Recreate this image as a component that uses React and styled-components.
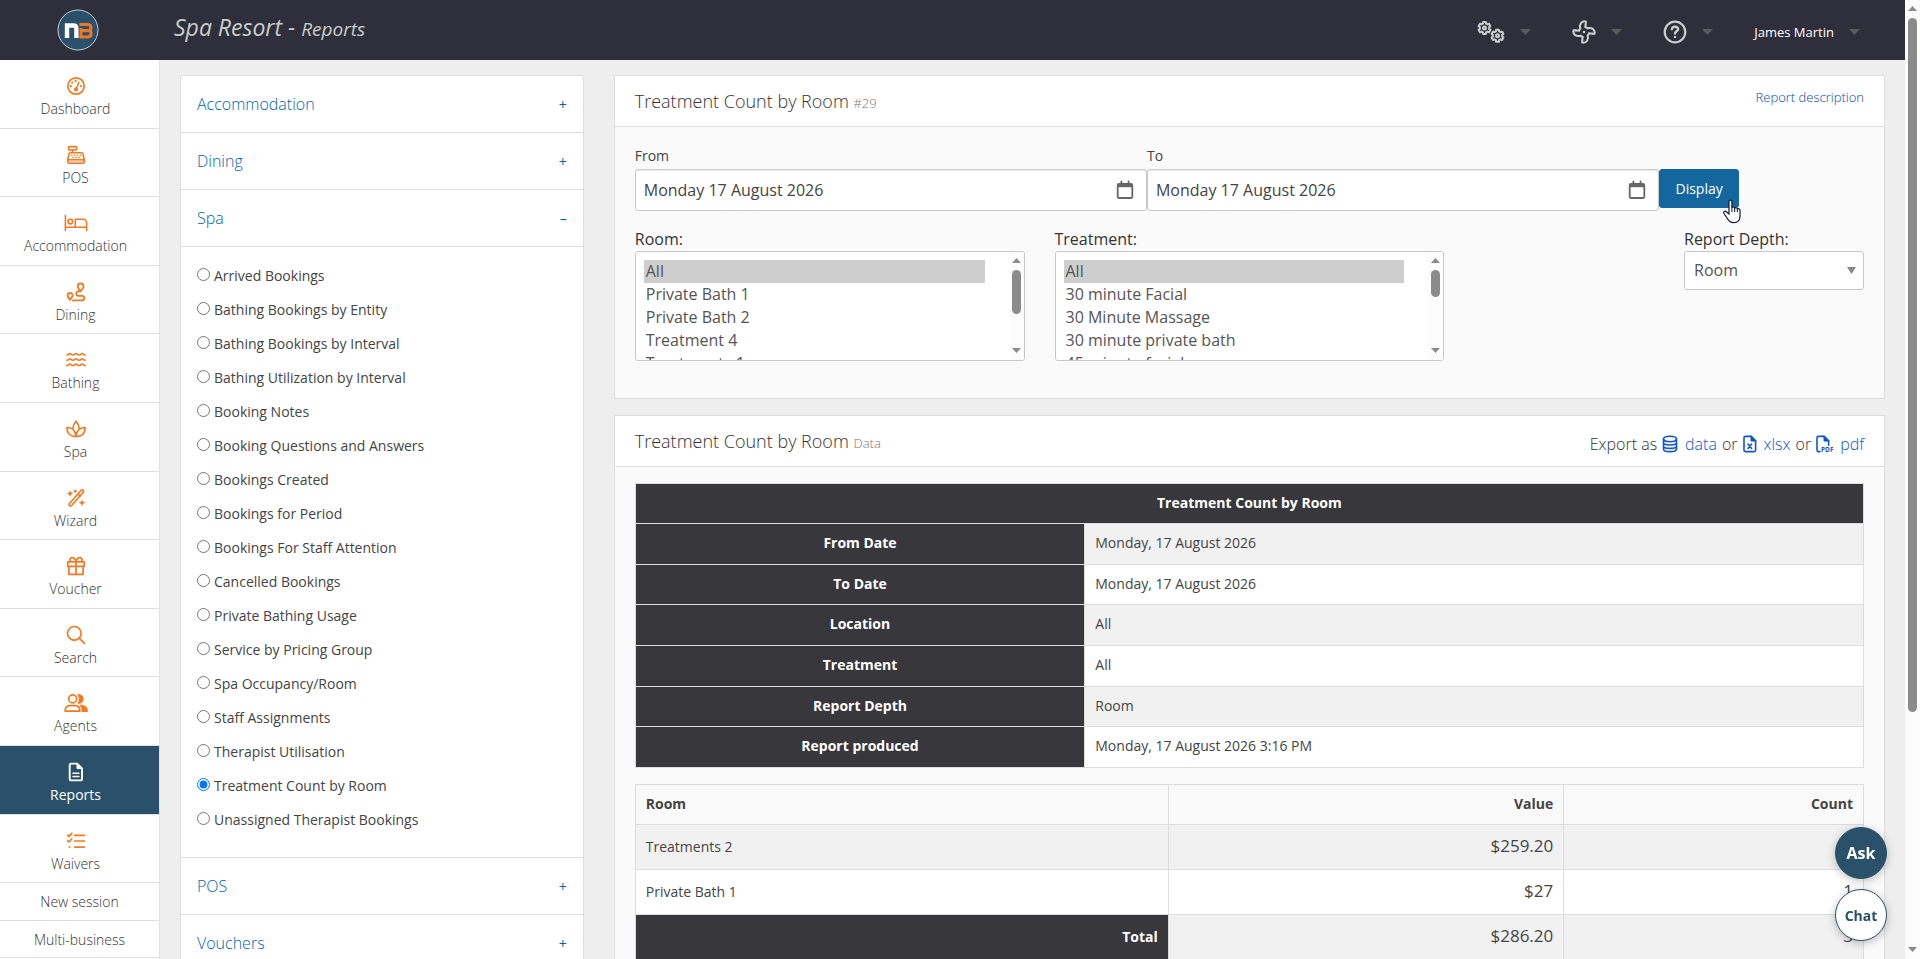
import React, { useState } from "react";
import styled, { createGlobalStyle, css } from "styled-components";

const GlobalStyle = createGlobalStyle`
  *, *::before, *::after {
    box-sizing: border-box;
  }

  body {
    margin: 0;
    background: #eeeeee;
    color: #444444;
    font-family: "Open Sans", "Noto Sans", sans-serif;
    font-size: 14px;
    line-height: 1.4;
  }

  button, input, select {
    font-family: inherit;
  }

  a {
    color: #1155cc;
    text-decoration: none;
  }
`;

/* ---------- shell ---------- */

const Shell = styled.div`
  display: flex;
  height: 100vh;
`;

const Page = styled.div`
  flex: 1;
  min-width: 0;
  overflow-y: auto;
  scrollbar-width: none;
`;

const TopBar = styled.header`
  display: flex;
  align-items: center;
  height: 60px;
  padding-right: 45px;
  background: #2e2f3b;
`;

const Brand = styled.a`
  display: flex;
  justify-content: center;
  width: 156px;
`;

const SiteTitle = styled.h1`
  flex: 1;
  margin: 0 0 4px 18px;
  color: #cccccc;
  font-size: 23px;
  font-style: italic;
  font-weight: 400;
  line-height: 30px;

  small {
    font-size: 19px;
  }
`;

const TopMenu = styled.nav`
  display: flex;
  align-items: center;
  gap: 41px;
`;

const TopMenuButton = styled.button`
  display: flex;
  align-items: center;
  gap: 15px;
  padding: 4px 0 0;
  border: 0;
  background: none;
  color: #cccccc;
  font-size: 13px;
  font-weight: 500;
  line-height: 20px;
  cursor: pointer;

  span {
    color: #ffffff;
  }
`;

const Body = styled.div`
  display: flex;
`;

/* ---------- left navigation ---------- */

const SideNav = styled.nav`
  flex: 0 0 160px;
  border-right: 1px solid #e0e0e0;
  background: #ffffff;
`;

const SideItem = styled.a`
  display: flex;
  flex-direction: column;
  align-items: center;
  gap: 3px;
  padding: 16px 8px 9px 0;
  border-bottom: 1px solid #e2dde2;
  color: #333333;
  font-weight: 300;

  svg {
    height: 20px;
    color: #f47920;
  }

  ${(props) =>
    props.$active &&
    css`
      background: #2a5169;
      color: #ffffff;
      font-weight: 400;

      svg {
        color: #ffffff;
      }
    `}
`;

const SideLink = styled.a`
  display: block;
  padding: 9px 0 8px;
  border-bottom: 1px solid #e2dde2;
  color: #333333;
  font-weight: 300;
  text-align: center;
`;

/* ---------- columns and accordion ---------- */

const Columns = styled.main`
  display: flex;
  flex: 1;
  align-items: flex-start;
  min-width: 0;
  padding: 15px 5px;
`;

const Column = styled.div`
  width: ${(props) => props.$width};
  padding: 0 15px;
`;

const Accordion = styled.div`
  border: 1px solid #dddddd;
  border-radius: 3px;
  background: #ffffff;
`;

const AccordionHead = styled.button`
  display: flex;
  align-items: center;
  justify-content: space-between;
  width: 100%;
  height: 57px;
  padding: 0 16px;
  border: 0;
  border-bottom: 1px solid #dddddd;
  background: none;
  color: #0066aa;
  font-size: 16px;
  font-weight: 300;
  text-align: left;
  cursor: pointer;

  span {
    font-size: 14px;
    font-weight: 400;
  }
`;

const ReportList = styled.ul`
  margin: 0;
  padding: 12px 16px 20px;
  border-bottom: 1px solid #dddddd;
  list-style: none;
`;

const ReportOption = styled.li`
  display: flex;
  align-items: center;
  height: 34px;

  label {
    display: flex;
    gap: 4px;
  }

  input {
    width: 13px;
    height: 13px;
    margin: 2px 0 0;
    accent-color: #0075ff;
  }
`;

/* ---------- panels ---------- */

const Panel = styled.section`
  margin-bottom: 16px;
  border: 1px solid #dddddd;
  background: #fafafa;
`;

const PanelHead = styled.div`
  display: flex;
  align-items: center;
  justify-content: space-between;
  height: 51px;
  padding: 2px 20px 0;
  border-bottom: 1px solid #dddddd;
  background: #ffffff;
`;

const PanelTitle = styled.h2`
  margin: 0;
  color: #333333;
  font-size: 18px;
  font-weight: 300;

  small {
    color: #777777;
    font-size: 13px;
  }
`;

const HeadLink = styled.a`
  padding-bottom: 10px;
  color: #0044bb;
  font-size: 13px;
  font-weight: 300;
`;

const Exports = styled.p`
  display: flex;
  align-items: center;
  gap: 5px;
  margin: 0;
  padding-top: 5px;
  color: #333333;
  font-size: 16px;
  font-weight: 300;

  a {
    display: flex;
    align-items: center;
    gap: 7px;
  }
`;

const PanelBody = styled.div`
  padding: 16px 20px;
`;

const DateRow = styled.div`
  display: flex;
  align-items: flex-start;
  padding-top: 3px;
`;

const DateField = styled.div`
  width: calc(100% * 5 / 12);

  label {
    display: block;
    padding-bottom: 3px;
  }
`;

const DateBox = styled.div`
  display: flex;
  align-items: center;
  height: 42px;
  padding-right: 12px;
  border: 1px solid #c8c8c8;
  border-radius: 3px;
  background: #ffffff;
  box-shadow: inset 0 1px 1px rgba(0, 0, 0, 0.08);

  input {
    flex: 1;
    min-width: 0;
    height: 38px;
    padding: 0 8px;
    border: 0;
    outline: 0;
    background: none;
    color: #444444;
    font-size: 16px;
  }
`;

const DisplayButton = styled.button`
  position: relative;
  min-width: 80px;
  height: 39px;
  margin-top: 23px;
  padding: 0 15px;
  border: 1px solid #14679e;
  border-radius: 3px;
  background: #14679e;
  color: #ffffff;
  font-size: 14px;
  cursor: pointer;
`;

const Pointer = styled.svg`
  position: absolute;
  right: -4px;
  bottom: -17px;
`;

const FilterRow = styled.div`
  display: grid;
  grid-template-columns: repeat(3, 1fr);
  gap: 30px;
  padding: 17px 0 21px;
  font-size: 16px;
  line-height: 22px;
`;

const Filter = styled.div`
  display: flex;
  flex-direction: column;
  gap: 1px;
  color: #333333;
`;

const DepthFilter = styled(Filter)`
  justify-self: end;
  width: 180px;
`;

const ListBox = styled.div`
  display: flex;
  height: 110px;
  border: 1px solid #c8c8c8;
  border-radius: 3px;
  background: #ffffff;
  overflow: hidden;

  select {
    flex: 1;
    min-width: 0;
    height: 108px;
    padding: 8px 24px 8px 8px;
    border: 0;
    outline: 0;
    background: #ffffff;
    color: #555555;
    font-size: 16px;
    scrollbar-width: none;
  }

  option {
    padding: 0 2px 1px;
    color: #555555;
  }

  option:checked {
    background: #cecece linear-gradient(#cecece, #cecece);
    color: #555555;
  }
`;

const DropDown = styled.div`
  display: grid;
  align-items: center;

  select,
  svg {
    grid-area: 1 / 1;
  }

  select {
    height: 39px;
    padding: 0 28px 0 9px;
    border: 1px solid #c8c8c8;
    border-radius: 3px;
    appearance: none;
    background: #ffffff;
    color: #555555;
    font-size: 16px;
  }

  svg {
    justify-self: end;
    margin-right: 8px;
    pointer-events: none;
  }
`;

/* ---------- scroll bars ---------- */

const Track = styled.div`
  display: flex;
  flex: 0 0 15px;
  flex-direction: column;
  align-items: center;
  gap: 7px;
  padding: 6px 0 7px;
  background: #fcfcfc;
  color: #8b8b8b;

  svg:last-child {
    margin-top: auto;
  }
`;

const Thumb = styled.div`
  width: 9px;
  height: ${(props) => props.$length};
  border-radius: 5px;
  background: #8b8b8b;
`;

/* ---------- tables ---------- */

const Table = styled.table`
  width: 100%;
  border-collapse: collapse;
  table-layout: fixed;
  background: #ffffff;

  & + & {
    margin-top: 16px;
  }

  th,
  td {
    padding: 9px 10px 11px;
    border: 1px solid #dddddd;
    text-align: left;
  }

  th {
    font-weight: 700;
  }
`;

const Row = styled.tr`
  background: ${(props) => (props.$shaded ? "#f1f1f1" : "#ffffff")};
`;

const DarkCell = styled.th`
  && {
    background: #38373c;
    color: #ffffff;
    text-align: ${(props) => props.$align || "center"};
  }
`;

const HeadCell = styled.th`
  width: ${(props) => props.$width};
  background: #f9f9f9;

  && {
    text-align: ${(props) => props.$align || "left"};
  }
`;

const NumberCell = styled.td`
  && {
    font-size: 17px;
    line-height: 24px;
    text-align: right;
  }
`;

/* ---------- floating buttons ---------- */

const Floating = styled.div`
  position: fixed;
  right: 33px;
  bottom: 18px;
  display: flex;
  flex-direction: column;
  gap: 10px;
`;

const RoundButton = styled.button`
  width: 52px;
  height: 52px;
  padding: 0;
  border: 1px solid #2a5169;
  border-radius: 50%;
  background: ${(props) => (props.$filled ? "#2a5169" : "#ffffff")};
  box-shadow: 0 2px 8px rgba(0, 0, 0, 0.25);
  color: ${(props) => (props.$filled ? "#ffffff" : "#2a5169")};
  font-size: ${(props) => (props.$filled ? "16px" : "14px")};
  font-weight: 700;
  cursor: pointer;
`;

/* ---------- icons ---------- */

const Icon = ({ w = 20, h = 20, stroke = 1.7, children, ...rest }) => (
  <svg
    width={w}
    height={h}
    viewBox={`0 0 ${w} ${h}`}
    fill="none"
    stroke="currentColor"
    strokeWidth={stroke}
    strokeLinecap="round"
    strokeLinejoin="round"
    aria-hidden="true"
    {...rest}
  >
    {children}
  </svg>
);

const Triangle = ({ w = 9, h = 5, up, color = "currentColor" }) => (
  <svg width={w} height={h} viewBox="0 0 10 10" preserveAspectRatio="none" aria-hidden="true">
    <path d={up ? "M0 10L5 0l5 10z" : "M0 0l5 10 5-10z"} fill={color} />
  </svg>
);

const DashboardIcon = () => (
  <Icon>
    <circle cx="10" cy="10" r="8.2" />
    <path d="M10.6 12l2.2-5.6" strokeWidth="1.5" />
    <g fill="currentColor" stroke="none">
      <circle cx="10" cy="13.4" r="2.1" />
      <circle cx="9.6" cy="4.9" r="1.1" />
      <circle cx="6.2" cy="6.6" r="1.1" />
      <circle cx="4.9" cy="10.2" r="1.1" />
      <circle cx="15" cy="10.2" r="1.1" />
    </g>
  </Icon>
);

const PosIcon = () => (
  <Icon stroke={1.6}>
    <rect x="2.6" y="1.6" width="8" height="3.4" rx="0.6" />
    <path d="M6.6 5v2.6M4.6 7.7h10.8c.8 0 1.4.4 1.6 1.2l1.2 5.6V17c0 .8-.5 1.3-1.3 1.3H3.1c-.8 0-1.3-.5-1.3-1.3v-2.5L3 8.900c.2-.8.8-1.2 1.6-1.2zM2 14.700h16" />
    <path d="M2.6 16.5h14.8" strokeOpacity=".4" />
    <path d="M5.7 10.2h.1M8.6 10.2h.1M11.5 10.2h.1M14.4 10.2h.1M7 12.4h.1M10 12.4h.1M13 12.4h.1" />
  </Icon>
);

const BedIcon = () => (
  <Icon w={24} stroke={1.6}>
    <path d="M1.4 2.5v15M1.4 14.3h21.2v3.2M11.3 14.1V6.2h7.6a3.7 3.7 0 0 1 3.7 3.7v4.4" />
    <circle cx="6.3" cy="8.6" r="2.3" />
  </Icon>
);

const RouteIcon = () => (
  <Icon stroke={1.8}>
    <path d="M14.6 9.2c-1.7-1.9-2.9-3.3-2.9-4.8a2.9 2.9 0 0 1 5.8 0c0 1.5-1.2 2.9-2.9 4.8zM14.6 9.3H12a2.3 2.3 0 0 0 0 4.5h4a2.3 2.3 0 0 1 0 4.6H6.8" />
    <path d="M4 17.8c-1.6-1.9-2.4-3.1-2.4-4.3a2.5 2.5 0 0 1 5 0c0 1.2-1 2.4-2.6 4.3z" />
  </Icon>
);

const WaterIcon = () => (
  <Icon stroke={1.6}>
    {[5, 10.3, 15.6].map((y) => (
      <path
        key={y}
        d={`M.8 ${y}c2 0 2-1.5 3.1-1.5s1.3 1.5 3.1 1.5 2-1.5 3-1.5 1.3 1.5 3.1 1.5 2-1.5 3-1.5 1.3 1.5 3.1 1.5`}
      />
    ))}
  </Icon>
);

const SpaIcon = () => (
  <Icon stroke={1.7}>
    <path d="M6.8 9.3C7.2 6.4 8.5 3.9 10 2.2c1.5 1.7 2.8 4.2 3.2 7.1" />
    <path d="M10 17.6C4.2 17.6.9 14.2.9 8.5c4.8 0 8.3 2.9 9.1 8.1.8-5.2 4.3-8.1 9.1-8.1 0 5.7-3.3 9.1-9.1 9.1z" />
  </Icon>
);

const WandIcon = () => (
  <Icon stroke={1.6}>
    <path d="M15.2 2.3c.6-.6 1.4-.6 2 0s.6 1.4 0 2L5.6 17.5c-.6.7-1.5.7-2.1.1s-.6-1.5 0-2.1zM11.9 5.9l2.3 2.2" />
    <path
      d="M4 2.2l1 2.3 2.3 1-2.3 1-1 2.3-1-2.3-2.3-1 2.3-1zM16 11.4l1 2.4 2.4 1-2.4 1-1 2.4-1-2.4-2.4-1 2.4-1zM9.3 1l.7 1.6 1.6.7-1.6.7-.7 1.6L8.600 4 7 3.3l1.6-.7z"
      fill="currentColor"
      stroke="none"
    />
  </Icon>
);

const GiftIcon = () => (
  <Icon stroke={1.7}>
    <path d="M1.8 5.9h16.4v4.4H1.8zM2.9 10.3h14.2v8H2.9zM10 5.9v12.4M10 5.7C9.3 3 8 1.6 6.3 1.6a2.2 2.2 0 0 0-1.7 3.8M10 5.7c.7-2.7 2-4.1 3.7-4.1a2.2 2.2 0 0 1 1.7 3.8" />
  </Icon>
);

const SearchIcon = () => (
  <Icon>
    <circle cx="8.3" cy="8.3" r="6.8" />
    <path d="M13.2 13.2l5.2 5.2" />
  </Icon>
);

const AgentsIcon = () => (
  <Icon w={24}>
    <circle cx="8.7" cy="5.9" r="4" />
    <path d="M1.2 18.2v-.9c0-3 2.2-4.7 5-4.7h4.6c2.8 0 5 1.7 5 4.7v.9z" />
    <path
      d="M12.8 1.4c4-.9 6.7 1.4 6.7 4.5s-2.7 5.4-6.3 4.6c2.4-2.6 2.4-6.5-.4-9.1zM15.4 11.9c5.2-.3 8.5 2 8.5 6.1 0 .7-.4 1-1 1h-5.4c.5-3-.2-5.4-2.1-7.1z"
      fill="currentColor"
      stroke="none"
    />
  </Icon>
);

const ReportsIcon = () => (
  <Icon stroke={1.9}>
    <path d="M5.2 1.6h5.9L16 6.5v10.3c0 .9-.6 1.6-1.5 1.6H5.200c-.9 0-1.5-.7-1.5-1.6V3.200c0-.9.6-1.6 1.5-1.6z" />
    <path d="M11 1.400v5.200h5.200z" fill="currentColor" strokeWidth="1" />
    <path d="M7 11.200h5.800M7 14.500h5.800" strokeWidth="1.6" />
  </Icon>
);

const WaiversIcon = () => (
  <Icon>
    <path d="M1.6 4.1L3 5.4l2.8-3M1.6 9.7L3 11l2.800-3M8.6 4.400h9.800M8.600 10h9.800M8.600 16.100h9.800M3.300 16.100h.5" />
  </Icon>
);

const CalendarIcon = () => (
  <Icon w={18} h={20} color="#666666" stroke={1.8}>
    <path d="M2.900 4h12.200c.7 0 1.200.5 1.200 1.200v11.600c0 .7-.5 1.200-1.200 1.200H2.900c-.7 0-1.200-.5-1.200-1.200V5.200C1.700 4.500 2.200 4 2.900 4zM5.400 1.500v2M12.600 1.500v2" />
    <path d="M1.7 4h14.6v3.2H1.7z" fill="currentColor" stroke="none" />
  </Icon>
);

const DatabaseIcon = () => (
  <Icon w={16} h={18} stroke={1.6}>
    <ellipse cx="8" cy="4" rx="6.5" ry="2.7" />
    <path d="M1.5 4v9.900c0 1.500 2.900 2.700 6.500 2.700s6.500-1.200 6.500-2.700V4M1.500 7.500c0 1.500 2.900 2.500 6.500 2.500s6.500-1 6.500-2.500M1.500 10.900c0 1.500 2.900 2.500 6.500 2.500s6.500-1 6.500-2.500" />
  </Icon>
);

const ExcelIcon = () => (
  <Icon w={14} h={18} stroke={1.6}>
    <path d="M2.300 1.400h5.900l4.400 4.400v9.500c0 .7-.6 1.300-1.300 1.300h-9c-.7 0-1.300-.6-1.300-1.300V2.700c0-.7.6-1.300 1.300-1.300z" />
    <path d="M8 1.200v4.800h4.800z" fill="currentColor" strokeWidth="1" />
    <path d="M5 9l3.600 4.500M8.600 9L5 13.500" />
  </Icon>
);

const PdfIcon = () => (
  <Icon w={17} h={18} stroke={1.6}>
    <path d="M4 16.600H2.300c-.8 0-1.300-.6-1.300-1.300V2.700c0-.8.5-1.300 1.300-1.300h5.900l4.400 4.400v4.400" />
    <path d="M8 1.200v4.800h4.800z" fill="currentColor" strokeWidth="1" />
    <text x="5" y="17.4" fontSize="6.5" fontWeight="700" fill="currentColor" stroke="none">
      PDF
    </text>
  </Icon>
);

const gearPath = (cx, cy, outer, inner, teeth) => {
  const step = (Math.PI * 2) / teeth;
  const points = [];
  for (let i = 0; i < teeth; i++) {
    [
      [-0.22, outer],
      [0.22, outer],
      [0.32, inner],
      [0.68, inner],
    ].forEach(([offset, radius]) => {
      const angle = (i + offset) * step;
      points.push(`${(cx + radius * Math.sin(angle)).toFixed(2)} ${(cy - radius * Math.cos(angle)).toFixed(2)}`);
    });
  }
  return `M${points.join("L")}z`;
};

const CogsIcon = () => (
  <Icon w={28} h={24} stroke={2}>
    <path d={gearPath(7.5, 8, 6.2, 4.7, 6)} />
    <circle cx="7.5" cy="8" r="1.5" />
    <path d={gearPath(20.5, 15.8, 6.2, 4.7, 6)} />
    <circle cx="20.5" cy="15.8" r="1.5" />
  </Icon>
);

const FanIcon = () => (
  <Icon w={24} h={24} stroke={2.1}>
    {[0, 90, 180, 270].map((turn) => (
      <path
        key={turn}
        transform={`rotate(${turn} 12 12)`}
        d="M8.3 8.6C7 4.2 9.5 1.2 13 1.3c.7 0 1 .5.9 1.1l-.6 4.8c.8.1 1.5.4 2.2.9"
      />
    ))}
    <circle cx="12" cy="12" r="1.3" fill="currentColor" stroke="none" />
  </Icon>
);

const HelpIcon = () => (
  <Icon w={24} h={24} stroke={2.2}>
    <circle cx="12" cy="12" r="10.3" />
    <path
      d="M8.9 9.2c.2-1.600 1.400-2.500 3-2.500 1.900 0 3.200 1.100 3.200 2.600 0 2-3.100 2.100-3.100 4.300M12 17v.1"
      strokeWidth="2.4"
    />
  </Icon>
);

const Logo = () => (
  <svg width="42" height="42" viewBox="0 0 42 42" fill="none" aria-label="Home">
    <circle cx="21" cy="21" r="20" fill="#2a5169" stroke="#c4ced6" />
    <path d="M10 29V16.5h6.500c2 0 2.900 1 2.900 3V29" stroke="#ffffff" strokeWidth="4.4" />
    <path
      d="M22.3 15.500h8.200c2.600 0 3.400 1 3.400 3 0 1.700-.7 2.700-1.900 3 1.400.3 2.100 1.400 2.100 3.100 0 2.300-1.200 3.400-3.700 3.400h-8.100M23.5 21.600h8M24 19v8"
      stroke="#ef7622"
      strokeWidth="3.2"
    />
    <path d="M25.600 18.600h6M25.600 24.800h6" stroke="#2a5169" strokeWidth="1.4" />
  </svg>
);

const HandPointer = () => (
  <Pointer width="20" height="25" viewBox="0 0 20 25" aria-hidden="true">
    <path
      d="M7 2.600c0-1.900 2.900-1.900 2.900 0v6.300c.3-1.300 2.700-1.200 2.800.4.500-1 2.600-.7 2.700.8.700-.8 2.600-.4 2.600 1.200V17c0 4.100-2.500 6.600-6.200 6.600-3.300 0-5-1.400-6.300-3.900l-3.700-5.400c-.9-1.700 1-2.900 2.500-1.500L7 15z"
      fill="#ffffff"
      stroke="#15152b"
      strokeWidth="1.2"
    />
    <path d="M9.9 9v4M12.7 9.500v3.500M15.400 10.500V13" stroke="#15152b" />
  </Pointer>
);

/* ---------- data ---------- */

const navItems = [
  { label: "Dashboard", icon: DashboardIcon },
  { label: "POS", icon: PosIcon },
  { label: "Accommodation", icon: BedIcon },
  { label: "Dining", icon: RouteIcon },
  { label: "Bathing", icon: WaterIcon },
  { label: "Spa", icon: SpaIcon },
  { label: "Wizard", icon: WandIcon },
  { label: "Voucher", icon: GiftIcon },
  { label: "Search", icon: SearchIcon },
  { label: "Agents", icon: AgentsIcon },
  { label: "Reports", icon: ReportsIcon },
  { label: "Waivers", icon: WaiversIcon },
];

const groups = ["Accommodation", "Dining", "Spa", "POS", "Vouchers"];

const spaReports = [
  "Arrived Bookings",
  "Bathing Bookings by Entity",
  "Bathing Bookings by Interval",
  "Bathing Utilization by Interval",
  "Booking Notes",
  "Booking Questions and Answers",
  "Bookings Created",
  "Bookings for Period",
  "Bookings For Staff Attention",
  "Cancelled Bookings",
  "Private Bathing Usage",
  "Service by Pricing Group",
  "Spa Occupancy/Room",
  "Staff Assignments",
  "Therapist Utilisation",
  "Treatment Count by Room",
  "Unassigned Therapist Bookings",
];

const rooms = ["All", "Private Bath 1", "Private Bath 2", "Treatment 4", "Treatments 1", "Treatments 2"];
const treatments = ["All", "30 minute Facial", "30 Minute Massage", "30 minute private bath", "45 minute facial"];

const summary = [
  ["From Date", "Monday, 17 August 2026"],
  ["To Date", "Monday, 17 August 2026"],
  ["Location", "All"],
  ["Treatment", "All"],
  ["Report Depth", "Room"],
  ["Report produced", "Monday, 17 August 2026 3:16 PM"],
];

const results = [
  { room: "Treatments 2", value: "$259.20", count: 2 },
  { room: "Private Bath 1", value: "$27", count: 1 },
];

/* ---------- components ---------- */

const ScrollTrack = ({ length }) => (
  <Track aria-hidden="true">
    <Triangle up />
    <Thumb $length={length} />
    <Triangle />
  </Track>
);

const DateInput = ({ id, label }) => {
  const [value, setValue] = useState("Monday 17 August 2026");
  return (
    <DateField>
      <label htmlFor={id}>{label}</label>
      <DateBox>
        <input id={id} type="text" value={value} onChange={(e) => setValue(e.target.value)} />
        <CalendarIcon />
      </DateBox>
    </DateField>
  );
};

const ListFilter = ({ id, label, options, thumb }) => (
  <Filter>
    <label htmlFor={id}>{label}</label>
    <ListBox>
      <select id={id} multiple defaultValue={["All"]}>
        {options.map((option) => (
          <option key={option}>{option}</option>
        ))}
      </select>
      <ScrollTrack length={thumb} />
    </ListBox>
  </Filter>
);

const ReportMenu = () => {
  const [open, setOpen] = useState("Spa");
  const [report, setReport] = useState("Treatment Count by Room");

  return (
    <Accordion>
      {groups.map((group) => (
        <React.Fragment key={group}>
          <AccordionHead
            type="button"
            aria-expanded={open === group}
            onClick={() => setOpen(open === group ? "" : group)}
          >
            {group}
            <span>{open === group ? "–" : "+"}</span>
          </AccordionHead>
          {group === "Spa" && open === group && (
            <ReportList>
              {spaReports.map((name) => (
                <ReportOption key={name}>
                  <label>
                    <input
                      type="radio"
                      name="report"
                      checked={report === name}
                      onChange={() => setReport(name)}
                    />
                    {name}
                  </label>
                </ReportOption>
              ))}
            </ReportList>
          )}
        </React.Fragment>
      ))}
    </Accordion>
  );
};

const FilterPanel = () => (
  <Panel>
    <PanelHead>
      <PanelTitle>
        Treatment Count by Room <small>#29</small>
      </PanelTitle>
      <HeadLink href="#description">Report description</HeadLink>
    </PanelHead>
    <PanelBody>
      <DateRow>
        <DateInput id="from" label="From" />
        <DateInput id="to" label="To" />
        <DisplayButton type="button">
          Display
          <HandPointer />
        </DisplayButton>
      </DateRow>
      <FilterRow>
        <ListFilter id="room" label="Room:" options={rooms} thumb="44px" />
        <ListFilter id="treatment" label="Treatment:" options={treatments} thumb="27px" />
        <DepthFilter>
          <label htmlFor="depth">Report Depth:</label>
          <DropDown>
            <select id="depth" defaultValue="Room">
              <option>Room</option>
              <option>Treatment</option>
            </select>
            <Triangle w={9} h={7} color="#888888" />
          </DropDown>
        </DepthFilter>
      </FilterRow>
    </PanelBody>
  </Panel>
);

const DataPanel = () => (
  <Panel>
    <PanelHead>
      <PanelTitle>
        Treatment Count by Room <small>Data</small>
      </PanelTitle>
      <Exports>
        Export as
        <a href="#data">
          <DatabaseIcon />
          data
        </a>
        or
        <a href="#xlsx">
          <ExcelIcon />
          xlsx
        </a>
        or
        <a href="#pdf">
          <PdfIcon />
          pdf
        </a>
      </Exports>
    </PanelHead>
    <PanelBody>
      <Table>
        <colgroup>
          <col width="36.6%" />
          <col />
        </colgroup>
        <thead>
          <tr>
            <DarkCell colSpan={2}>Treatment Count by Room</DarkCell>
          </tr>
        </thead>
        <tbody>
          {summary.map(([name, value], i) => (
            <Row key={name} $shaded={i % 2 === 0}>
              <DarkCell scope="row">{name}</DarkCell>
              <td>{value}</td>
            </Row>
          ))}
        </tbody>
      </Table>
      <Table>
        <thead>
          <tr>
            <HeadCell $width="43.4%">Room</HeadCell>
            <HeadCell $width="32.2%" $align="right">
              Value
            </HeadCell>
            <HeadCell $align="right">Count</HeadCell>
          </tr>
        </thead>
        <tbody>
          {results.map(({ room, value, count }, i) => (
            <Row key={room} $shaded={i % 2 === 0}>
              <td>{room}</td>
              <NumberCell>{value}</NumberCell>
              <NumberCell>{count}</NumberCell>
            </Row>
          ))}
          <Row $shaded>
            <DarkCell scope="row" $align="right">
              Total
            </DarkCell>
            <NumberCell>$286.20</NumberCell>
            <NumberCell>3</NumberCell>
          </Row>
        </tbody>
      </Table>
    </PanelBody>
  </Panel>
);

const App = () => (
  <Shell>
    <GlobalStyle />
    <Page>
      <TopBar>
        <Brand href="#home">
          <Logo />
        </Brand>
        <SiteTitle>
          Spa Resort - <small>Reports</small>
        </SiteTitle>
        <TopMenu>
          {[CogsIcon, FanIcon, HelpIcon].map((MenuIcon, i) => (
            <TopMenuButton key={i} type="button">
              <MenuIcon />
              <Triangle w={11} h={6} color="#5a5a5a" />
            </TopMenuButton>
          ))}
          <TopMenuButton type="button">
            <span>James Martin</span>
            <Triangle w={11} h={6} color="#5a5a5a" />
          </TopMenuButton>
        </TopMenu>
      </TopBar>
      <Body>
        <SideNav>
          {navItems.map(({ label, icon: NavIcon }) => (
            <SideItem key={label} href={`#${label.toLowerCase()}`} $active={label === "Reports"}>
              <NavIcon />
              {label}
            </SideItem>
          ))}
          <SideLink href="#new-session">New session</SideLink>
          <SideLink href="#multi-business">Multi-business</SideLink>
        </SideNav>
        <Columns>
          <Column $width="25%">
            <ReportMenu />
          </Column>
          <Column $width="75%">
            <FilterPanel />
            <DataPanel />
          </Column>
        </Columns>
      </Body>
    </Page>
    <ScrollTrack length="694px" />
    <Floating>
      <RoundButton type="button" $filled>
        Ask
      </RoundButton>
      <RoundButton type="button">Chat</RoundButton>
    </Floating>
  </Shell>
);

export default App;
